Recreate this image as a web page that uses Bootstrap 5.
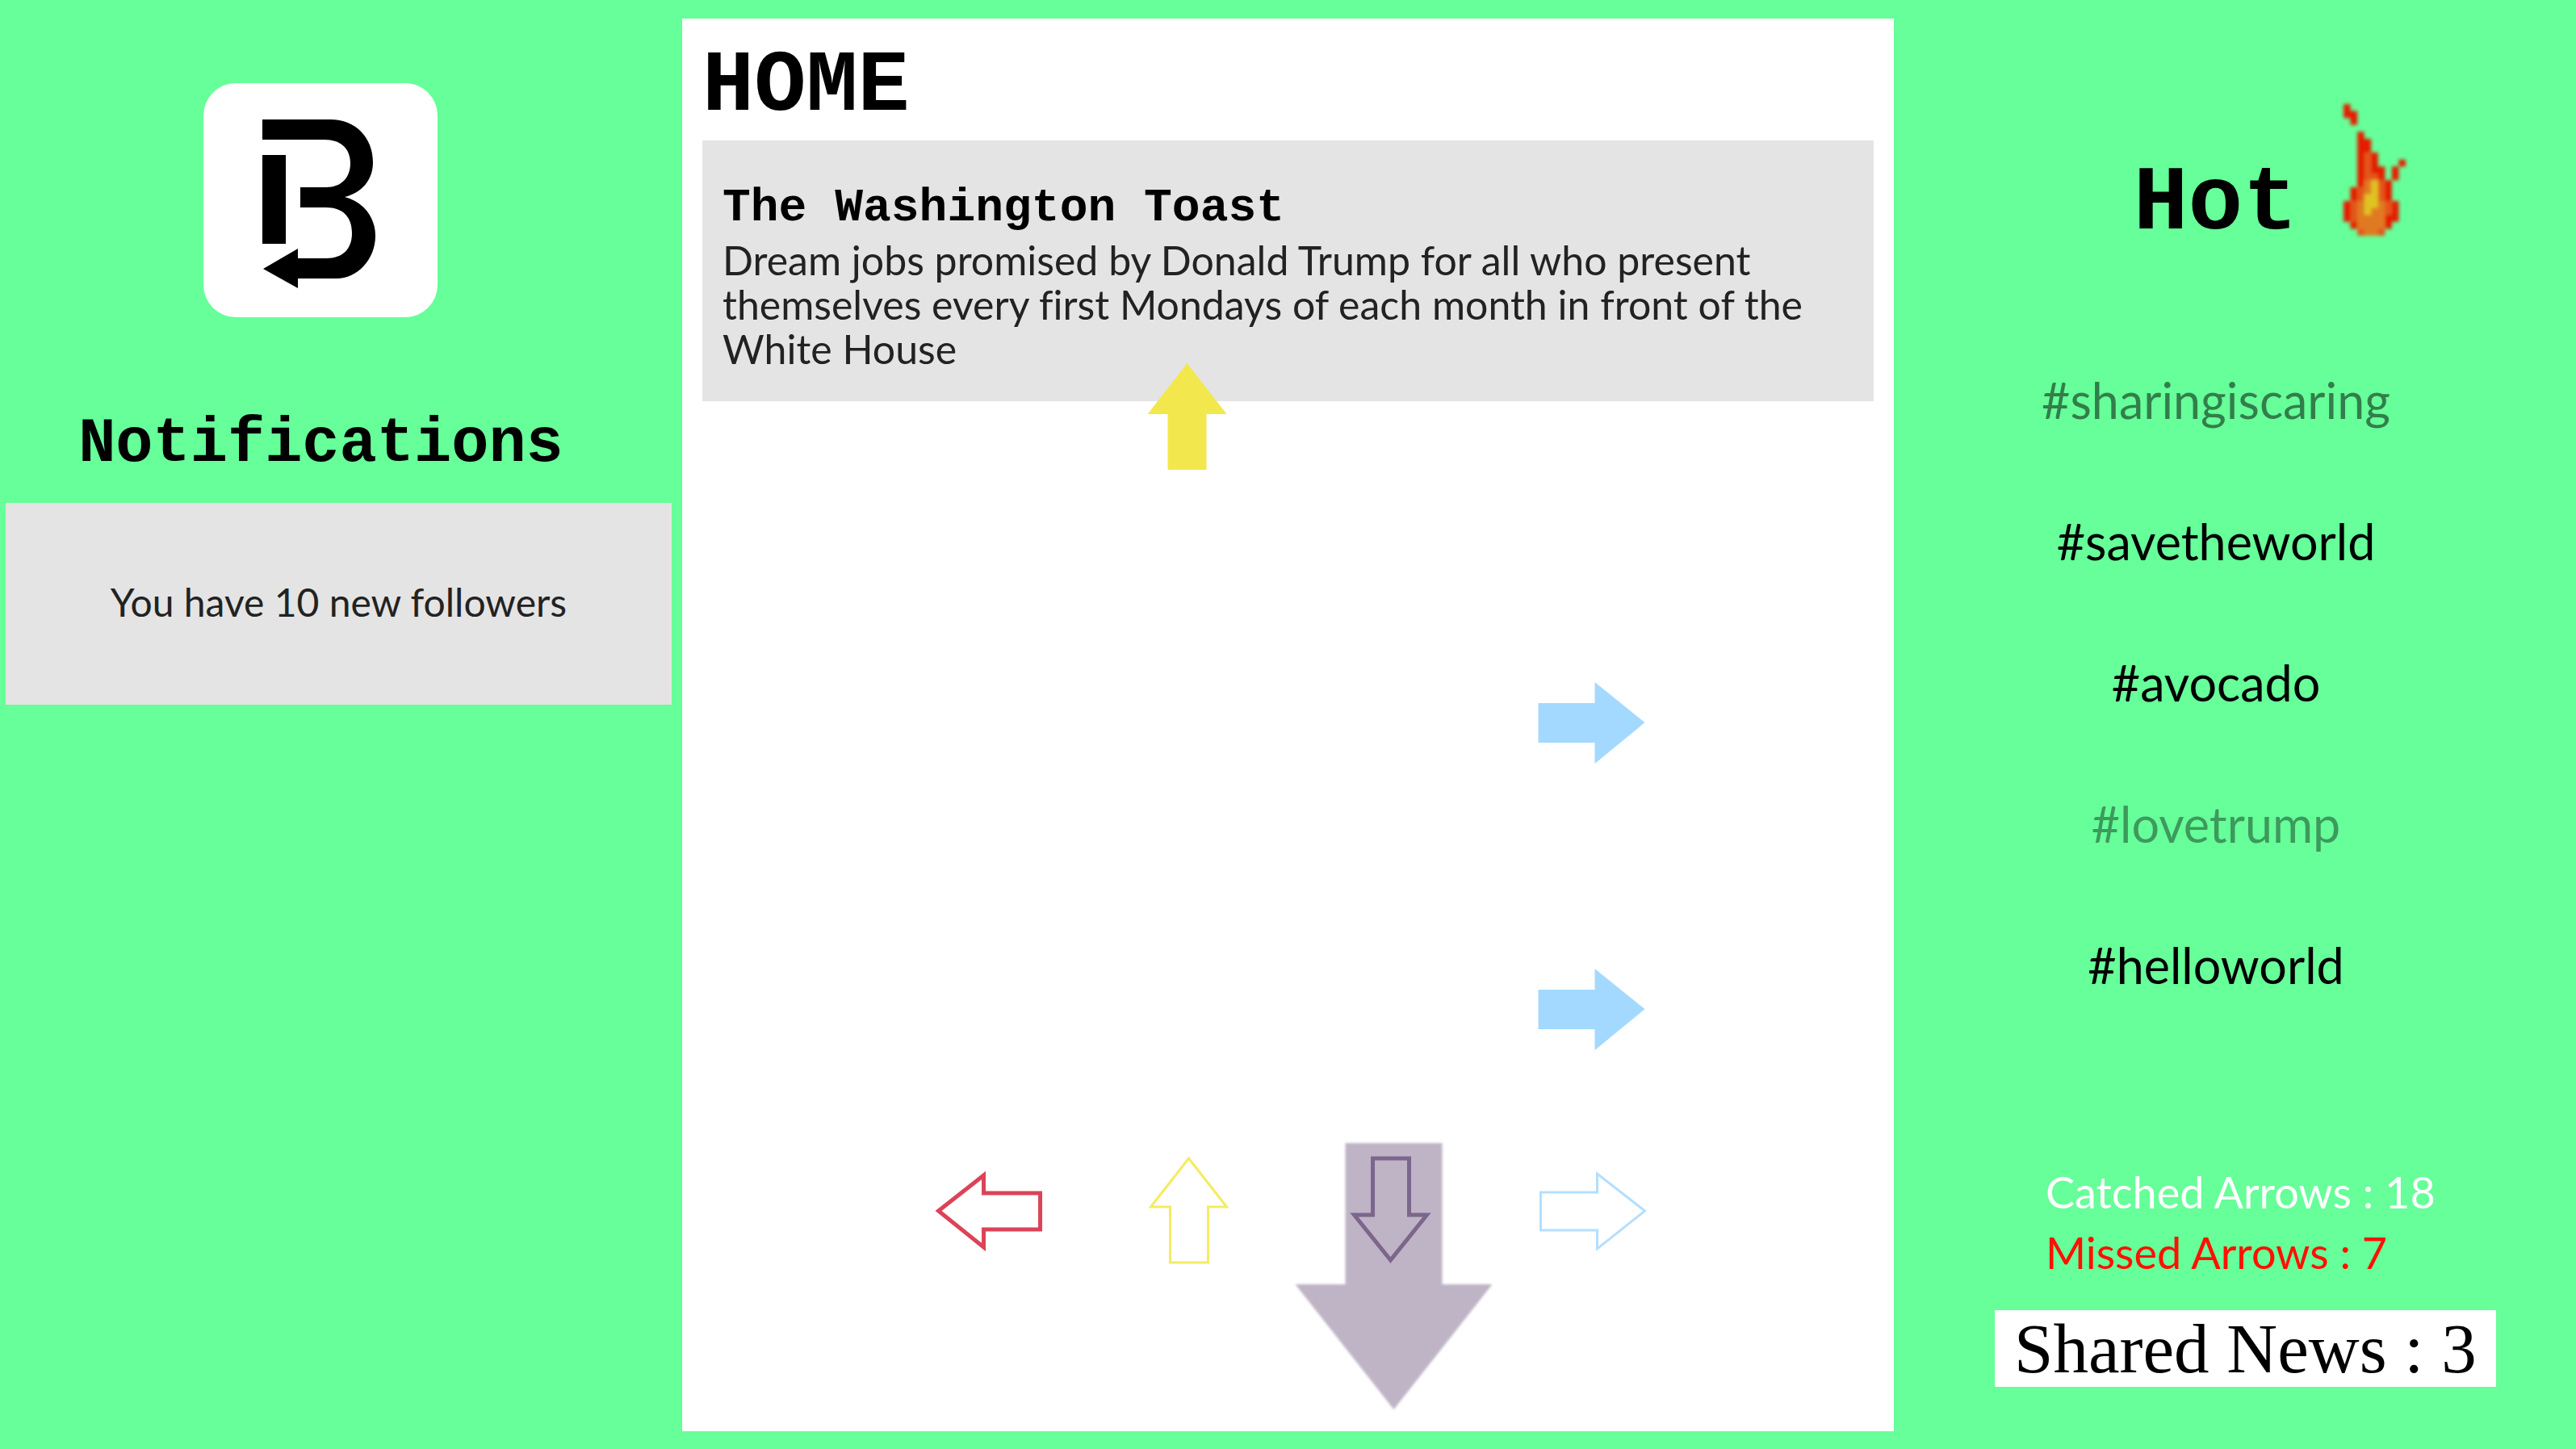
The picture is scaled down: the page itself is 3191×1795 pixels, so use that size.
<!DOCTYPE html>
<html lang="en">
<head>
<meta charset="utf-8">
<meta name="viewport" content="width=device-width, initial-scale=1">
<title>Home</title>
<link href="https://cdn.jsdelivr.net/npm/bootstrap@5.3.0/dist/css/bootstrap.min.css" rel="stylesheet">
<style>
body { background: #66ff99; color: #000; font-family: Lato, sans-serif; font-size: 48px; line-height: 55px; font-variant-ligatures: none; }
h1, h2, h3 { font-family: "Liberation Mono", monospace; font-weight: 700; margin: 0; }
h1 { font-size: 107px; line-height: 120px; }
h2 { font-size: 77px; line-height: 100px; }
h3 { font-size: 58px; line-height: 64px; }
.side-col { flex: 0 0 26.48%; }
.feed-col { flex: 1 1 0; margin: 23px 0 22px; padding: 25px; }
.brand { padding: 103px 50px 22px 0; gap: 108px; }
.logo { width: 290px; height: 290px; }
.notice { background: #e4e4e4; margin: 0 13px 0 7px; padding: 95px 24px 100px; color: #222; }
.news { background: #e4e4e4; margin-top: 6px; padding: 52px 25px 37px; }
.news p { color: #222; margin-top: 5px; font-size: 50px; }
.play-layer { inset: 0; pointer-events: none; }
.hot-head { padding: 129px 0 0 86px; gap: 57px; }
.hot-head h2 { font-size: 113px; line-height: 120px; }
.flame { width: 77px; height: 163px; margin-bottom: 21px; overflow: visible; }
.tags { margin-top: 95px; padding-right: 47px; font-size: 61px; line-height: 175px; }
.tags a { color: #000; text-decoration: none; }
.tags .fading { color: rgba(0, 0, 0, .4); }
.score { padding: 0 0 77px 125px; }
.counts { padding-left: 63px; margin-bottom: 34px; font-size: 54px; line-height: 75px; }
.caught { color: #fff; }
.missed { color: #f10; }
.shared { font: 87px/95px "Liberation Serif", serif; padding: 0 24px; }
</style>
</head>
<body>
<div class="d-flex min-vh-100">
  <aside class="side-col">
    <div class="brand d-flex flex-column align-items-center">
      <svg class="logo" viewBox="0 0 290 290" role="img" aria-label="Logo">
        <rect width="290" height="290" rx="40" fill="#fff"/>
        <path d="M73 45H157C189 45 210 68 210 98C210 120 196 136 175 141C198 147 213 166 213 189C213 219 190 242 165 242H117V254L74 230L117 205V217H152C173 217 184 205 184 186C184 166 173 154 152 154H120V129H152C171 129 182 117 182 99C182 81 170 70 150 70H73Z"/>
        <path d="M73 89H102V199H73Z"/>
      </svg>
      <h2>Notifications</h2>
    </div>
    <div class="notice text-center">You have 10 new followers</div>
  </aside>

  <main class="feed-col bg-white position-relative">
    <h1>HOME</h1>
    <article class="news">
      <h3>The Washington Toast</h3>
      <p class="mb-0">Dream jobs promised by Donald Trump for all who present themselves every first Mondays of each month in front of the White House</p>
    </article>
    <!-- falling arrows and their targets -->
    <svg class="play-layer position-absolute w-100 h-100" viewBox="0 0 1500 1750" aria-hidden="true">
      <defs>
        <filter id="soft"><feGaussianBlur stdDeviation="1.5"/></filter>
      </defs>
      <path filter="url(#soft)" fill="#bfb4c6" d="M821 1393H941V1568H1003L881 1723L759 1568H821Z"/>
      <path fill="#f2e84e" d="M625 427L674 490H649V559H601V490H576Z"/>
      <g fill="#a4d9ff">
        <path d="M1060 848H1130V822L1192 872L1130 923V897H1060Z"/>
        <path d="M1060 1203H1130V1177L1192 1227L1130 1278V1252H1060Z"/>
      </g>
      <g fill="none">
        <path stroke="#dc4358" stroke-width="5" d="M317 1477L373 1433V1455H443V1500H373V1522Z"/>
        <path stroke="#f5eb62" stroke-width="3" d="M627 1412L674 1472H651V1541H604V1472H580Z"/>
        <path stroke="#7c668c" stroke-width="5" d="M855 1412H900V1482H922L877 1538L832 1482H855Z"/>
        <path stroke="#b4dfff" stroke-width="3" d="M1063 1454H1133V1431L1192 1477L1133 1524V1501H1063Z"/>
      </g>
    </svg>
  </main>

  <aside class="side-col d-flex flex-column">
    <div class="hot-head d-flex justify-content-center align-items-end">
      <h2>Hot</h2>
      <svg class="flame" viewBox="0 0 9 19" preserveAspectRatio="none" aria-hidden="true">
        <defs><filter id="glow"><feGaussianBlur stdDeviation="0.22"/></filter></defs>
        <g filter="url(#glow)">
          <path fill="#e51c00" d="M0 0H1V1H2V3H1V2H0ZM2 4H3V5H4V7H5V9H6V11H7V14H8V17H7V18H6V18H2V18H1V17H0V14H1V12H2ZM8 8H9V9H8ZM7 9H8V11H7Z"/>
          <path fill="#e2561e" d="M3 7H4V9H4V10H5V11H6V14H7V16H6V19H2V17H1V14H2V12H3Z"/>
          <path fill="#e07a20" d="M3 11H5V14H6V17H6V18H5V19H3V18H2V14H3Z"/>
          <path fill="#dfc322" d="M4 11H5V15H4V16H3V13H4Z"/>
        </g>
      </svg>
    </div>
    <ul class="tags list-unstyled text-center mb-0">
      <li><a class="opacity-50" href="#sharingiscaring">#sharingiscaring</a></li>
      <li><a href="#savetheworld">#savetheworld</a></li>
      <li><a href="#avocado">#avocado</a></li>
      <li><a class="fading" href="#lovetrump">#lovetrump</a></li>
      <li><a href="#helloworld">#helloworld</a></li>
    </ul>
    <div class="score mt-auto">
      <div class="counts">
        <div class="caught">Catched Arrows : 18</div>
        <div class="missed">Missed Arrows : 7</div>
      </div>
      <div class="shared d-inline-block bg-white">Shared News : 3</div>
    </div>
  </aside>
</div>
<script src="https://cdn.jsdelivr.net/npm/bootstrap@5.3.0/dist/js/bootstrap.bundle.min.js"></script>
</body>
</html>
